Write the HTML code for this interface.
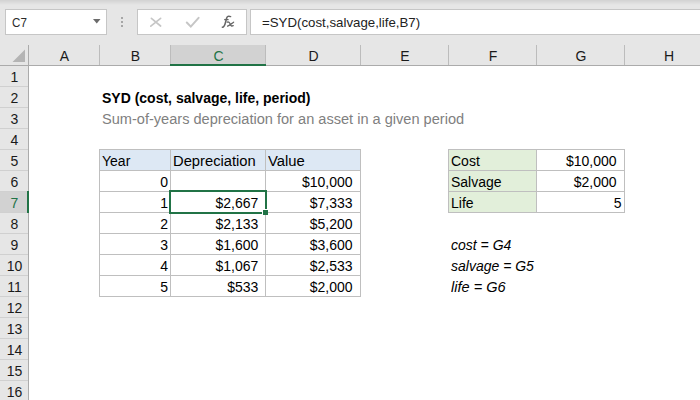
<!DOCTYPE html>
<html><head><meta charset="utf-8"><style>
html,body{margin:0;padding:0;}
body{width:700px;height:400px;overflow:hidden;position:relative;background:#fff;font-family:'Liberation Sans', sans-serif;}
</style></head><body>
<div style="position:absolute;left:0px;top:0px;width:700px;height:65px;background:#e6e6e6;"></div>
<div style="position:absolute;left:0px;top:0px;width:700px;height:5px;background:linear-gradient(#d2d2d2,#e6e6e6);"></div>
<div style="position:absolute;left:5px;top:9px;width:100px;height:24px;background:#fff;border:1px solid #c6c6c6;"></div>
<div style="position:absolute;left:12.4px;top:15.69px;font:normal normal 12.5px 'Liberation Sans', sans-serif;color:#2a2a2a;white-space:nowrap;line-height:normal;transform:scaleX(0.93);transform-origin:left 0;">C7</div>
<svg style="position:absolute;left:93px;top:19px" width="8" height="5"><path d="M0 0H7.5L3.75 4.5Z" fill="#6b6b6b"/></svg>
<div style="position:absolute;left:121px;top:17px;width:2px;height:2px;background:#a6a6a6;"></div>
<div style="position:absolute;left:121px;top:21px;width:2px;height:2px;background:#a6a6a6;"></div>
<div style="position:absolute;left:121px;top:25px;width:2px;height:2px;background:#a6a6a6;"></div>
<div style="position:absolute;left:137px;top:9px;width:108px;height:24px;background:#fff;border:1px solid #c6c6c6;"></div>
<svg style="position:absolute;left:149px;top:16px" width="14" height="13"><path d="M2.4 2.4L11.6 10M11.6 2.4L1.8 10.2" stroke="#c6c6c6" stroke-width="1.7" fill="none" stroke-linecap="round"/></svg>
<svg style="position:absolute;left:185px;top:16px" width="16" height="13"><path d="M1.8 6.5L5.8 10.6L13.6 1.8" stroke="#c6c6c6" stroke-width="2" fill="none" stroke-linecap="round"/></svg>
<svg style="position:absolute;left:216px;top:12px" width="20" height="18"><path d="M6.3 15.2C8.2 15.4 8.8 13.5 9.6 10L10.6 6.2C11.2 4.3 12.4 3.8 14.6 4.6" stroke="#666" stroke-width="1.5" fill="none" stroke-linecap="round"/><path d="M8.2 7.6H12.6" stroke="#666" stroke-width="1.3"/><path d="M11.2 10.2C12.6 9.6 13.6 10.4 14.2 12.2C14.8 14 15.8 14.4 17.2 13.6M11.6 14.2C13.6 13.4 15.4 11.6 17.6 10.2" stroke="#666" stroke-width="1.3" fill="none" stroke-linecap="round"/></svg>
<div style="position:absolute;left:250px;top:9px;width:460px;height:24px;background:#fff;border:1px solid #c6c6c6;"></div>
<div style="position:absolute;left:262px;top:14.73px;font:normal normal 13px 'Liberation Sans', sans-serif;color:#222;white-space:nowrap;line-height:normal;transform:scaleX(1.02);transform-origin:left 0;">=SYD(cost,salvage,life,B7)</div>
<div style="position:absolute;left:0px;top:45px;width:700px;height:20px;background:#e6e6e6;"></div>
<div style="position:absolute;left:170px;top:45px;width:95px;height:20px;background:#d2d2d2;"></div>
<div style="position:absolute;left:99px;top:45px;width:1px;height:20px;background:#bcbcbc;"></div>
<div style="position:absolute;left:170px;top:45px;width:1px;height:20px;background:#bcbcbc;"></div>
<div style="position:absolute;left:265px;top:45px;width:1px;height:20px;background:#bcbcbc;"></div>
<div style="position:absolute;left:360px;top:45px;width:1px;height:20px;background:#bcbcbc;"></div>
<div style="position:absolute;left:448px;top:45px;width:1px;height:20px;background:#bcbcbc;"></div>
<div style="position:absolute;left:536px;top:45px;width:1px;height:20px;background:#bcbcbc;"></div>
<div style="position:absolute;left:624px;top:45px;width:1px;height:20px;background:#bcbcbc;"></div>
<div style="position:absolute;left:0px;top:65px;width:700px;height:1px;background:#ababab;"></div>
<div style="position:absolute;left:170px;top:64px;width:96px;height:2px;background:#217346;"></div>
<div style="position:absolute;left:-35.5px;width:200px;text-align:center;top:48.33px;font:normal normal 14px 'Liberation Sans', sans-serif;color:#1a1a1a;white-space:nowrap;line-height:normal;">A</div>
<div style="position:absolute;left:35.5px;width:200px;text-align:center;top:48.33px;font:normal normal 14px 'Liberation Sans', sans-serif;color:#1a1a1a;white-space:nowrap;line-height:normal;">B</div>
<div style="position:absolute;left:118.5px;width:200px;text-align:center;top:48.33px;font:normal normal 14px 'Liberation Sans', sans-serif;color:#217346;white-space:nowrap;line-height:normal;">C</div>
<div style="position:absolute;left:213.5px;width:200px;text-align:center;top:48.33px;font:normal normal 14px 'Liberation Sans', sans-serif;color:#1a1a1a;white-space:nowrap;line-height:normal;">D</div>
<div style="position:absolute;left:305.0px;width:200px;text-align:center;top:48.33px;font:normal normal 14px 'Liberation Sans', sans-serif;color:#1a1a1a;white-space:nowrap;line-height:normal;">E</div>
<div style="position:absolute;left:393.0px;width:200px;text-align:center;top:48.33px;font:normal normal 14px 'Liberation Sans', sans-serif;color:#1a1a1a;white-space:nowrap;line-height:normal;">F</div>
<div style="position:absolute;left:481.0px;width:200px;text-align:center;top:48.33px;font:normal normal 14px 'Liberation Sans', sans-serif;color:#1a1a1a;white-space:nowrap;line-height:normal;">G</div>
<div style="position:absolute;left:569.0px;width:200px;text-align:center;top:48.33px;font:normal normal 14px 'Liberation Sans', sans-serif;color:#1a1a1a;white-space:nowrap;line-height:normal;">H</div>
<svg style="position:absolute;left:12px;top:49px" width="14" height="14"><path d="M13 0.5V13H0.5Z" fill="#b4b4b4"/></svg>
<div style="position:absolute;left:0px;top:66px;width:28px;height:334px;background:#e6e6e6;"></div>
<div style="position:absolute;left:0px;top:192px;width:28px;height:20px;background:#d2d2d2;"></div>
<div style="position:absolute;left:28px;top:45px;width:1px;height:355px;background:#ababab;"></div>
<div style="position:absolute;left:0px;top:86px;width:28px;height:1px;background:#d0d0d0;"></div>
<div style="position:absolute;left:-85.5px;width:200px;text-align:center;top:69.33px;font:normal normal 14px 'Liberation Sans', sans-serif;color:#1a1a1a;white-space:nowrap;line-height:normal;">1</div>
<div style="position:absolute;left:0px;top:107px;width:28px;height:1px;background:#d0d0d0;"></div>
<div style="position:absolute;left:-85.5px;width:200px;text-align:center;top:90.33px;font:normal normal 14px 'Liberation Sans', sans-serif;color:#1a1a1a;white-space:nowrap;line-height:normal;">2</div>
<div style="position:absolute;left:0px;top:128px;width:28px;height:1px;background:#d0d0d0;"></div>
<div style="position:absolute;left:-85.5px;width:200px;text-align:center;top:111.33px;font:normal normal 14px 'Liberation Sans', sans-serif;color:#1a1a1a;white-space:nowrap;line-height:normal;">3</div>
<div style="position:absolute;left:0px;top:149px;width:28px;height:1px;background:#d0d0d0;"></div>
<div style="position:absolute;left:-85.5px;width:200px;text-align:center;top:132.33px;font:normal normal 14px 'Liberation Sans', sans-serif;color:#1a1a1a;white-space:nowrap;line-height:normal;">4</div>
<div style="position:absolute;left:0px;top:170px;width:28px;height:1px;background:#d0d0d0;"></div>
<div style="position:absolute;left:-85.5px;width:200px;text-align:center;top:153.33px;font:normal normal 14px 'Liberation Sans', sans-serif;color:#1a1a1a;white-space:nowrap;line-height:normal;">5</div>
<div style="position:absolute;left:0px;top:191px;width:28px;height:1px;background:#d0d0d0;"></div>
<div style="position:absolute;left:-85.5px;width:200px;text-align:center;top:174.33px;font:normal normal 14px 'Liberation Sans', sans-serif;color:#1a1a1a;white-space:nowrap;line-height:normal;">6</div>
<div style="position:absolute;left:0px;top:212px;width:28px;height:1px;background:#d0d0d0;"></div>
<div style="position:absolute;left:-85.5px;width:200px;text-align:center;top:195.33px;font:normal normal 14px 'Liberation Sans', sans-serif;color:#217346;white-space:nowrap;line-height:normal;">7</div>
<div style="position:absolute;left:0px;top:233px;width:28px;height:1px;background:#d0d0d0;"></div>
<div style="position:absolute;left:-85.5px;width:200px;text-align:center;top:216.33px;font:normal normal 14px 'Liberation Sans', sans-serif;color:#1a1a1a;white-space:nowrap;line-height:normal;">8</div>
<div style="position:absolute;left:0px;top:254px;width:28px;height:1px;background:#d0d0d0;"></div>
<div style="position:absolute;left:-85.5px;width:200px;text-align:center;top:237.33px;font:normal normal 14px 'Liberation Sans', sans-serif;color:#1a1a1a;white-space:nowrap;line-height:normal;">9</div>
<div style="position:absolute;left:0px;top:275px;width:28px;height:1px;background:#d0d0d0;"></div>
<div style="position:absolute;left:-85.5px;width:200px;text-align:center;top:258.33px;font:normal normal 14px 'Liberation Sans', sans-serif;color:#1a1a1a;white-space:nowrap;line-height:normal;">10</div>
<div style="position:absolute;left:0px;top:296px;width:28px;height:1px;background:#d0d0d0;"></div>
<div style="position:absolute;left:-85.5px;width:200px;text-align:center;top:279.33px;font:normal normal 14px 'Liberation Sans', sans-serif;color:#1a1a1a;white-space:nowrap;line-height:normal;">11</div>
<div style="position:absolute;left:0px;top:317px;width:28px;height:1px;background:#d0d0d0;"></div>
<div style="position:absolute;left:-85.5px;width:200px;text-align:center;top:300.33px;font:normal normal 14px 'Liberation Sans', sans-serif;color:#1a1a1a;white-space:nowrap;line-height:normal;">12</div>
<div style="position:absolute;left:0px;top:338px;width:28px;height:1px;background:#d0d0d0;"></div>
<div style="position:absolute;left:-85.5px;width:200px;text-align:center;top:321.33px;font:normal normal 14px 'Liberation Sans', sans-serif;color:#1a1a1a;white-space:nowrap;line-height:normal;">13</div>
<div style="position:absolute;left:0px;top:359px;width:28px;height:1px;background:#d0d0d0;"></div>
<div style="position:absolute;left:-85.5px;width:200px;text-align:center;top:342.33px;font:normal normal 14px 'Liberation Sans', sans-serif;color:#1a1a1a;white-space:nowrap;line-height:normal;">14</div>
<div style="position:absolute;left:0px;top:380px;width:28px;height:1px;background:#d0d0d0;"></div>
<div style="position:absolute;left:-85.5px;width:200px;text-align:center;top:363.33px;font:normal normal 14px 'Liberation Sans', sans-serif;color:#1a1a1a;white-space:nowrap;line-height:normal;">15</div>
<div style="position:absolute;left:0px;top:401px;width:28px;height:1px;background:#d0d0d0;"></div>
<div style="position:absolute;left:-85.5px;width:200px;text-align:center;top:384.33px;font:normal normal 14px 'Liberation Sans', sans-serif;color:#1a1a1a;white-space:nowrap;line-height:normal;">16</div>
<div style="position:absolute;left:27px;top:191px;width:2px;height:22px;background:#217346;"></div>
<div style="position:absolute;left:29px;top:66px;width:671px;height:334px;background:#fff;"></div>
<div style="position:absolute;left:102px;top:90.33px;font:normal bold 14px 'Liberation Sans', sans-serif;color:#000;white-space:nowrap;line-height:normal;">SYD (cost, salvage, life, period)</div>
<div style="position:absolute;left:102px;top:111.33px;font:normal normal 14px 'Liberation Sans', sans-serif;color:#808080;white-space:nowrap;line-height:normal;transform:scaleX(1.041);transform-origin:left 0;">Sum-of-years depreciation for an asset in a given period</div>
<div style="position:absolute;left:100px;top:150px;width:260px;height:20px;background:#dde8f4;"></div>
<div style="position:absolute;left:99px;top:149px;width:1px;height:148px;background:#bfbfbf;"></div>
<div style="position:absolute;left:170px;top:149px;width:1px;height:148px;background:#bfbfbf;"></div>
<div style="position:absolute;left:265px;top:149px;width:1px;height:148px;background:#bfbfbf;"></div>
<div style="position:absolute;left:360px;top:149px;width:1px;height:148px;background:#bfbfbf;"></div>
<div style="position:absolute;left:99px;top:149px;width:262px;height:1px;background:#bfbfbf;"></div>
<div style="position:absolute;left:99px;top:170px;width:262px;height:1px;background:#bfbfbf;"></div>
<div style="position:absolute;left:99px;top:191px;width:262px;height:1px;background:#bfbfbf;"></div>
<div style="position:absolute;left:99px;top:212px;width:262px;height:1px;background:#bfbfbf;"></div>
<div style="position:absolute;left:99px;top:233px;width:262px;height:1px;background:#bfbfbf;"></div>
<div style="position:absolute;left:99px;top:254px;width:262px;height:1px;background:#bfbfbf;"></div>
<div style="position:absolute;left:99px;top:275px;width:262px;height:1px;background:#bfbfbf;"></div>
<div style="position:absolute;left:99px;top:296px;width:262px;height:1px;background:#bfbfbf;"></div>
<div style="position:absolute;left:102px;top:153.33px;font:normal normal 14px 'Liberation Sans', sans-serif;color:#000;white-space:nowrap;line-height:normal;">Year</div>
<div style="position:absolute;left:173px;top:153.33px;font:normal normal 14px 'Liberation Sans', sans-serif;color:#000;white-space:nowrap;line-height:normal;transform:scaleX(1.053);transform-origin:left 0;">Depreciation</div>
<div style="position:absolute;left:268px;top:153.33px;font:normal normal 14px 'Liberation Sans', sans-serif;color:#000;white-space:nowrap;line-height:normal;transform:scaleX(1.06);transform-origin:left 0;">Value</div>
<div style="position:absolute;right:532px;top:174.33px;font:normal normal 14px 'Liberation Sans', sans-serif;color:#000;white-space:nowrap;line-height:normal;">0</div>
<div style="position:absolute;right:347.5px;top:174.33px;font:normal normal 14px 'Liberation Sans', sans-serif;color:#000;white-space:nowrap;line-height:normal;">$10,000</div>
<div style="position:absolute;right:532px;top:195.33px;font:normal normal 14px 'Liberation Sans', sans-serif;color:#000;white-space:nowrap;line-height:normal;">1</div>
<div style="position:absolute;right:441.7px;top:195.33px;font:normal normal 14px 'Liberation Sans', sans-serif;color:#000;white-space:nowrap;line-height:normal;">$2,667</div>
<div style="position:absolute;right:347.5px;top:195.33px;font:normal normal 14px 'Liberation Sans', sans-serif;color:#000;white-space:nowrap;line-height:normal;">$7,333</div>
<div style="position:absolute;right:532px;top:216.33px;font:normal normal 14px 'Liberation Sans', sans-serif;color:#000;white-space:nowrap;line-height:normal;">2</div>
<div style="position:absolute;right:441.7px;top:216.33px;font:normal normal 14px 'Liberation Sans', sans-serif;color:#000;white-space:nowrap;line-height:normal;">$2,133</div>
<div style="position:absolute;right:347.5px;top:216.33px;font:normal normal 14px 'Liberation Sans', sans-serif;color:#000;white-space:nowrap;line-height:normal;">$5,200</div>
<div style="position:absolute;right:532px;top:237.33px;font:normal normal 14px 'Liberation Sans', sans-serif;color:#000;white-space:nowrap;line-height:normal;">3</div>
<div style="position:absolute;right:441.7px;top:237.33px;font:normal normal 14px 'Liberation Sans', sans-serif;color:#000;white-space:nowrap;line-height:normal;">$1,600</div>
<div style="position:absolute;right:347.5px;top:237.33px;font:normal normal 14px 'Liberation Sans', sans-serif;color:#000;white-space:nowrap;line-height:normal;">$3,600</div>
<div style="position:absolute;right:532px;top:258.33px;font:normal normal 14px 'Liberation Sans', sans-serif;color:#000;white-space:nowrap;line-height:normal;">4</div>
<div style="position:absolute;right:441.7px;top:258.33px;font:normal normal 14px 'Liberation Sans', sans-serif;color:#000;white-space:nowrap;line-height:normal;">$1,067</div>
<div style="position:absolute;right:347.5px;top:258.33px;font:normal normal 14px 'Liberation Sans', sans-serif;color:#000;white-space:nowrap;line-height:normal;">$2,533</div>
<div style="position:absolute;right:532px;top:279.33px;font:normal normal 14px 'Liberation Sans', sans-serif;color:#000;white-space:nowrap;line-height:normal;">5</div>
<div style="position:absolute;right:441.7px;top:279.33px;font:normal normal 14px 'Liberation Sans', sans-serif;color:#000;white-space:nowrap;line-height:normal;">$533</div>
<div style="position:absolute;right:347.5px;top:279.33px;font:normal normal 14px 'Liberation Sans', sans-serif;color:#000;white-space:nowrap;line-height:normal;">$2,000</div>
<div style="position:absolute;left:449px;top:150px;width:87px;height:62px;background:#e2efda;"></div>
<div style="position:absolute;left:448px;top:149px;width:1px;height:64px;background:#bfbfbf;"></div>
<div style="position:absolute;left:536px;top:149px;width:1px;height:64px;background:#bfbfbf;"></div>
<div style="position:absolute;left:624px;top:149px;width:1px;height:64px;background:#bfbfbf;"></div>
<div style="position:absolute;left:448px;top:149px;width:177px;height:1px;background:#bfbfbf;"></div>
<div style="position:absolute;left:448px;top:170px;width:177px;height:1px;background:#bfbfbf;"></div>
<div style="position:absolute;left:448px;top:191px;width:177px;height:1px;background:#bfbfbf;"></div>
<div style="position:absolute;left:448px;top:212px;width:177px;height:1px;background:#bfbfbf;"></div>
<div style="position:absolute;left:451px;top:153.33px;font:normal normal 14px 'Liberation Sans', sans-serif;color:#000;white-space:nowrap;line-height:normal;">Cost</div>
<div style="position:absolute;left:451px;top:174.33px;font:normal normal 14px 'Liberation Sans', sans-serif;color:#000;white-space:nowrap;line-height:normal;">Salvage</div>
<div style="position:absolute;left:451px;top:195.33px;font:normal normal 14px 'Liberation Sans', sans-serif;color:#000;white-space:nowrap;line-height:normal;">Life</div>
<div style="position:absolute;right:83.5px;top:153.33px;font:normal normal 14px 'Liberation Sans', sans-serif;color:#000;white-space:nowrap;line-height:normal;">$10,000</div>
<div style="position:absolute;right:83.5px;top:174.33px;font:normal normal 14px 'Liberation Sans', sans-serif;color:#000;white-space:nowrap;line-height:normal;">$2,000</div>
<div style="position:absolute;right:78.5px;top:195.33px;font:normal normal 14px 'Liberation Sans', sans-serif;color:#000;white-space:nowrap;line-height:normal;">5</div>
<div style="position:absolute;left:451px;top:237.33px;font:italic normal 14px 'Liberation Sans', sans-serif;color:#000;white-space:nowrap;line-height:normal;">cost = G4</div>
<div style="position:absolute;left:451px;top:258.33px;font:italic normal 14px 'Liberation Sans', sans-serif;color:#000;white-space:nowrap;line-height:normal;">salvage = G5</div>
<div style="position:absolute;left:451px;top:279.33px;font:italic normal 14px 'Liberation Sans', sans-serif;color:#000;white-space:nowrap;line-height:normal;transform:scaleX(1.04);transform-origin:left 0;">life = G6</div>
<div style="position:absolute;left:169px;top:190px;width:98px;height:2px;background:#217346;"></div>
<div style="position:absolute;left:169px;top:190px;width:2px;height:24px;background:#217346;"></div>
<div style="position:absolute;left:169px;top:212px;width:93px;height:2px;background:#217346;"></div>
<div style="position:absolute;left:265px;top:190px;width:2px;height:19px;background:#217346;"></div>
<div style="position:absolute;left:262px;top:209px;width:6px;height:6px;background:#fff;"></div>
<div style="position:absolute;left:263px;top:210px;width:5px;height:5px;background:#217346;"></div>
</body></html>
